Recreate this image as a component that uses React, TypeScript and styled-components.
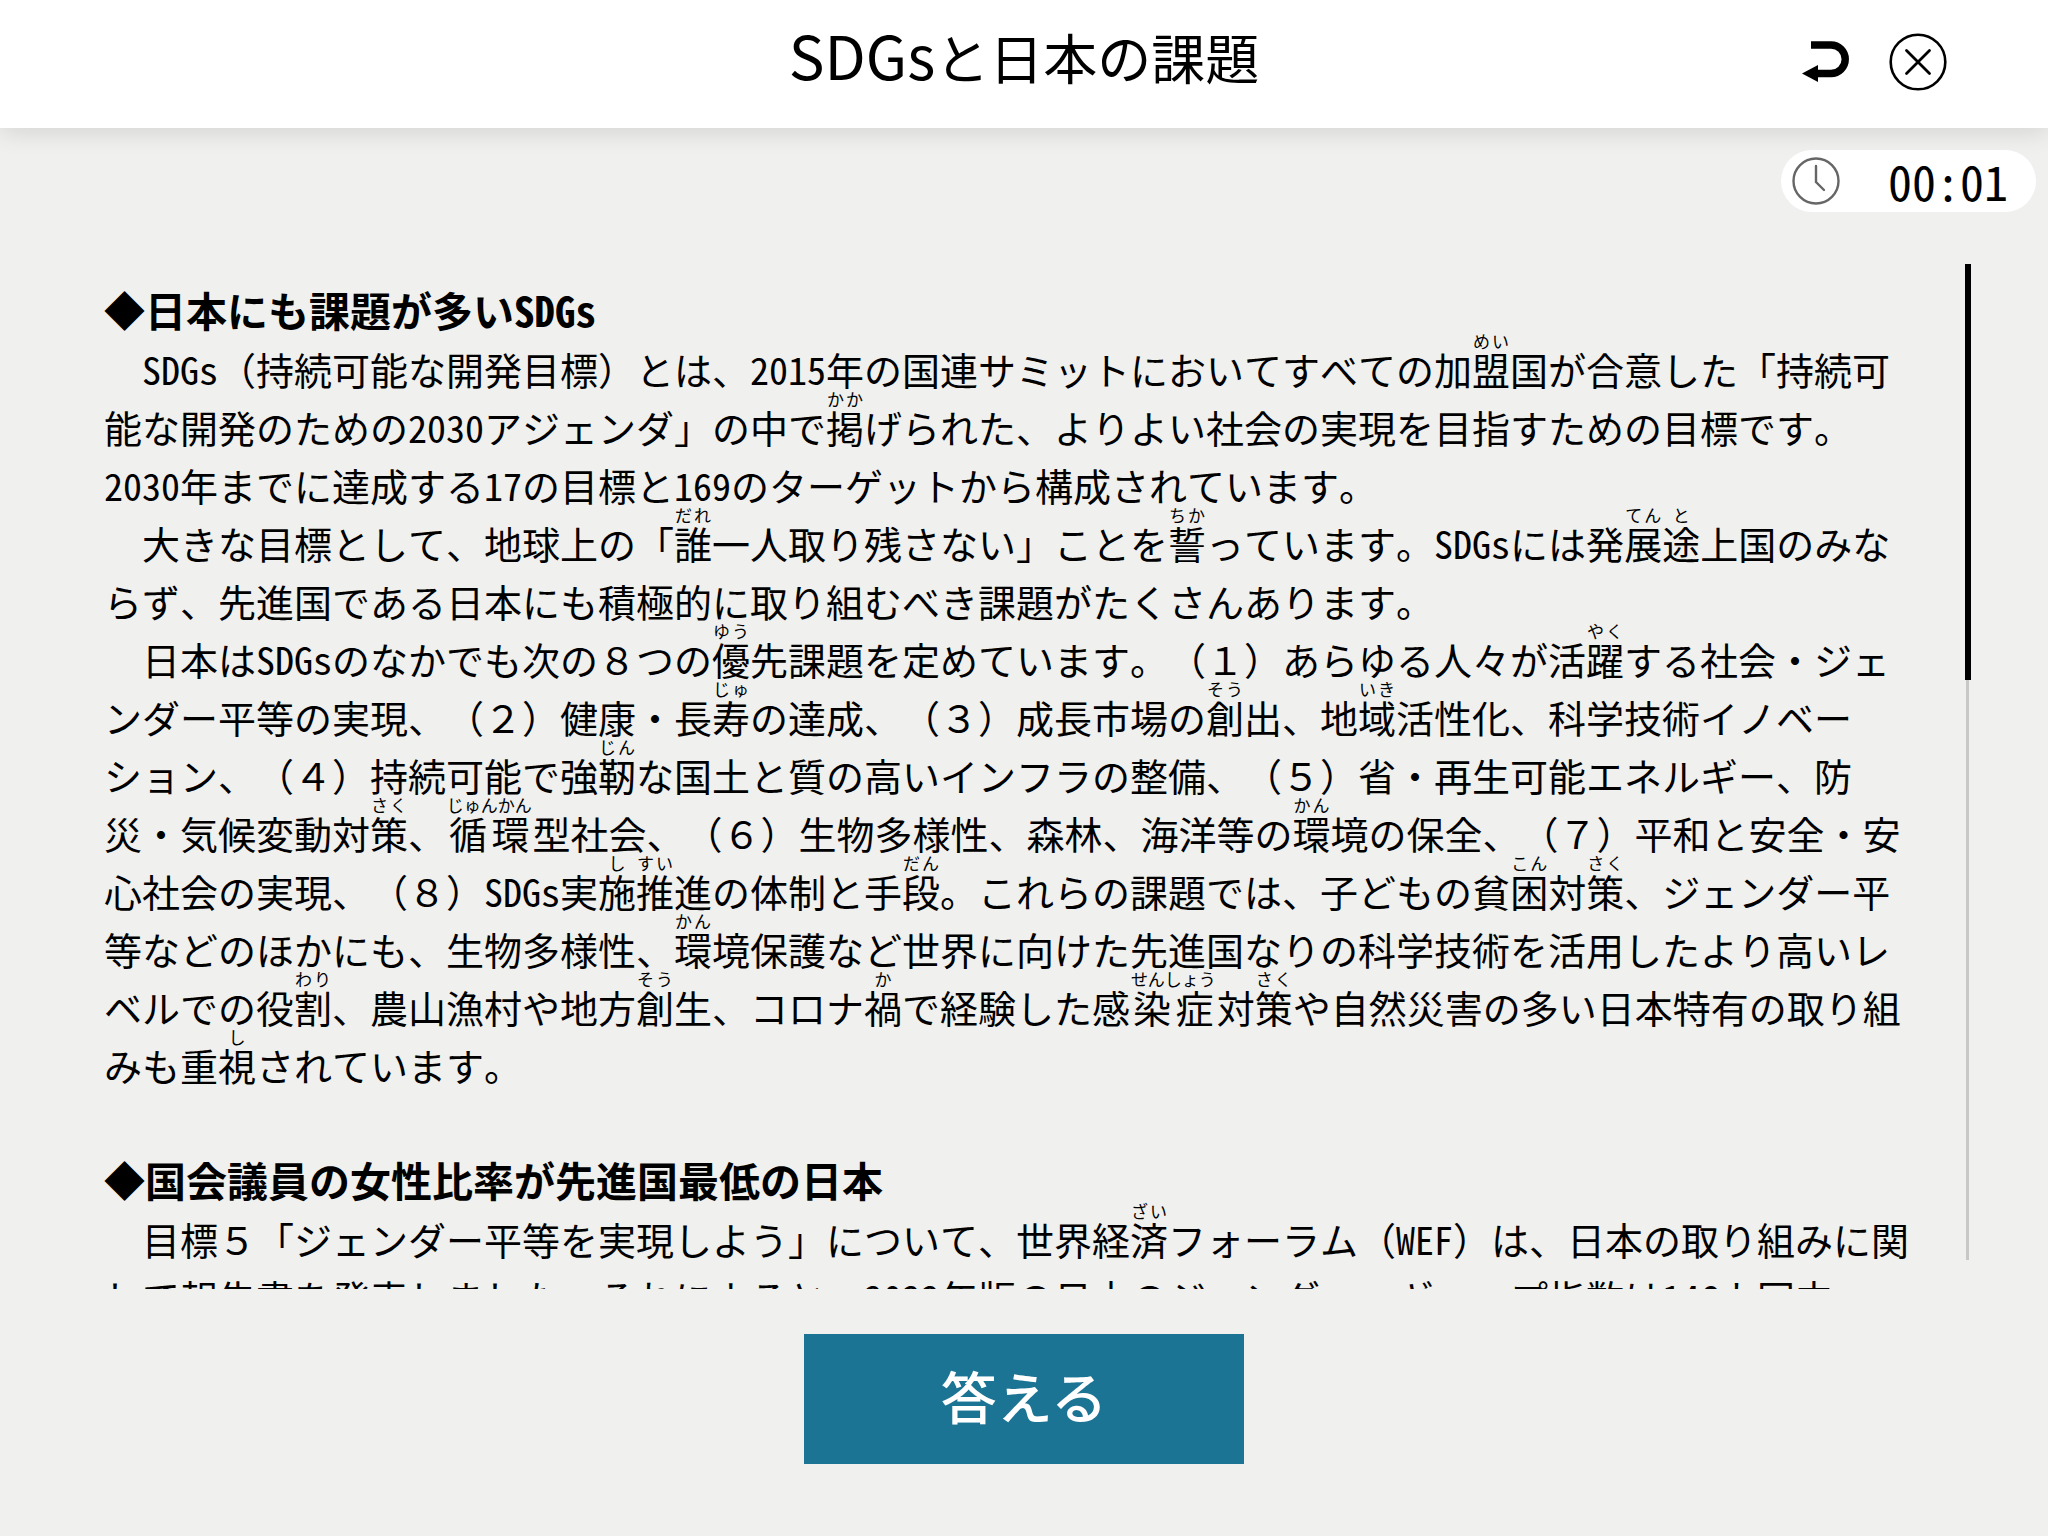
import React from "react";
import styled, { createGlobalStyle } from "styled-components";

const GlobalStyle = createGlobalStyle`
  html, body, #root { height: 100%; }
  body {
    margin: 0;
    background: #f0f0ee;
    color: #000;
    font-family: "Noto Sans CJK JP", sans-serif;
    font-kerning: none;
    text-spacing-trim: space-all;
    overflow: hidden;
  }
`;

const Screen = styled.div`
  height: 100%;
  display: flex;
  flex-direction: column;
`;

const Header = styled.header`
  flex: none;
  height: 128px;
  box-sizing: border-box;
  padding: 0 101px 4px;
  display: grid;
  grid-template-columns: 1fr auto 1fr;
  align-items: center;
  background: #fff;
  box-shadow: 0 4px 24px rgba(0, 0, 0, 0.12);
`;

const Title = styled.h1`
  grid-column: 2;
  align-self: start;
  margin: 0;
  font-size: 54px;
  font-weight: 400;
  line-height: 108px;
`;

const TitleLatin = styled.span`
  font-size: 60px;
`;

const HeaderActions = styled.div`
  display: flex;
  justify-content: flex-end;
  align-items: center;
  gap: 39px;
`;

const IconButton = styled.button`
  display: flex;
  padding: 0;
  border: 0;
  background: none;
  color: inherit;
  cursor: pointer;
`;

const TimerRow = styled.div`
  flex: none;
  display: flex;
  justify-content: flex-end;
  padding: 22px 12px 0;
`;

const TimerPill = styled.div`
  width: 255px;
  height: 62px;
  box-sizing: border-box;
  padding: 0 28px 0 11px;
  display: flex;
  align-items: center;
  justify-content: space-between;
  border-radius: 31px;
  background: #fff;
`;

const TimerText = styled.time`
  height: 62px;
  font-size: 48px;
  line-height: 60px;
  font-feature-settings: "hwid";
`;

const Reader = styled.main`
  flex: 1;
  min-height: 0;
  display: flex;
  margin-top: 52px;
  padding: 0 77px 0 104px;
`;

/* Headings and paragraphs share one inline flow, so that readings above
   a paragraph's first line do not open up the line spacing. */
const Article = styled.article`
  flex: 1;
  min-width: 0;
  overflow: hidden;
  padding-top: 18px;
  font-size: 38px;
  line-height: 58px;
  line-break: strict;
`;

const Section = styled.section`
  display: inline;

  &:not(:last-child)::after {
    content: "\\A";
    white-space: pre;
  }
`;

const Heading = styled.h2`
  display: inline;
  margin: 0;
  font-size: 41px;
  font-weight: 700;
  line-height: 48px;

  &::after {
    content: "\\A";
    white-space: pre;
  }
`;

const Paragraph = styled.p`
  display: inline;
  margin: 0;

  &::after {
    content: "\\A";
    white-space: pre;
  }
`;

const Half = styled.span`
  font-feature-settings: "hwid";
`;

const Furigana = styled.ruby<{ $wide: boolean }>`
  margin: 0 ${(p) => (p.$wide ? "3px" : "0")};
`;

const Reading = styled.rt`
  font-size: 17px;
`;

const ScrollTrack = styled.div`
  flex: none;
  width: 6px;
  margin: 0 0 29px 48px;
  background: linear-gradient(#c8c8c6, #c8c8c6) 1px 0 / 3px 100% no-repeat;
`;

const ScrollThumb = styled.div`
  width: 6px;
  height: 416px;
  background: #000;
`;

const Footer = styled.footer`
  flex: none;
  display: flex;
  justify-content: center;
  padding: 45px 0 72px;
`;

const AnswerButton = styled.button`
  width: 440px;
  height: 130px;
  padding: 0 0 8px;
  border: 0;
  background: #1c7495;
  color: #fff;
  font-family: inherit;
  font-size: 56px;
  font-weight: 500;
  line-height: 122px;
  cursor: pointer;
`;

const BackIcon = () => (
  <svg width="48" height="44" viewBox="0 0 48 44" fill="none" aria-hidden="true">
    <path d="M9 5H29A14.2 14.2 0 0 1 29 33.5H15" stroke="currentColor" strokeWidth="7.4" />
    <path d="M0 33.5L16 25V42Z" fill="currentColor" />
  </svg>
);

const CloseIcon = () => (
  <svg width="58" height="58" viewBox="0 0 58 58" fill="none" stroke="currentColor" aria-hidden="true">
    <circle cx="29" cy="29" r="27.3" strokeWidth="2.6" />
    <path d="M17.5 17.5L40.5 40.5M40.5 17.5L17.5 40.5" strokeWidth="2.8" strokeLinecap="round" />
  </svg>
);

const ClockIcon = () => (
  <svg width="48" height="48" viewBox="0 0 48 48" fill="none" stroke="#666" aria-hidden="true">
    <circle cx="24" cy="24" r="22.5" strokeWidth="2.4" />
    <path d="M24 9V25L32 33" strokeWidth="2.4" strokeLinecap="round" />
  </svg>
);

const R = ({ b, t }: { b: string; t: string }) => (
  <Furigana $wide={t.length > b.length * 2}>
    {b}
    <Reading>{t}</Reading>
  </Furigana>
);

export default function App() {
  return (
    <Screen lang="ja">
      <GlobalStyle />
      <Header>
        <Title>
          <TitleLatin>SDGs</TitleLatin>と日本の課題
        </Title>
        <HeaderActions>
          <IconButton type="button" aria-label="戻る">
            <BackIcon />
          </IconButton>
          <IconButton type="button" aria-label="閉じる">
            <CloseIcon />
          </IconButton>
        </HeaderActions>
      </Header>
      <TimerRow>
        <TimerPill>
          <ClockIcon />
          <TimerText>00:01</TimerText>
        </TimerPill>
      </TimerRow>
      <Reader>
        <Article>
          <Section>
            <Heading>
              ◆日本にも課題が多い<Half>SDGs</Half>
            </Heading>
            <Paragraph>
              {"　"}<Half>SDGs</Half>（持続可能な開発目標）とは、<Half>2015</Half>年の国連サミットにおいてすべての加<R b="盟" t="めい" />国が合意した「持続可能な開発のための<Half>2030</Half>アジェンダ」の中で<R b="掲" t="かか" />げられた、よりよい社会の実現を目指すための目標です。<Half>2030</Half>年までに達成する<Half>17</Half>の目標と<Half>169</Half>のターゲットから構成されています。
            </Paragraph>
            <Paragraph>
              {"　"}大きな目標として、地球上の「<R b="誰" t="だれ" />一人取り残さない」ことを<R b="誓" t="ちか" />っています。<Half>SDGs</Half>には発<R b="展" t="てん" /><R b="途" t="と" />上国のみならず、先進国である日本にも積極的に取り組むべき課題がたくさんあります。
            </Paragraph>
            <Paragraph>
              {"　"}日本は<Half>SDGs</Half>のなかでも次の８つの<R b="優" t="ゆう" />先課題を定めています。（１）あらゆる人々が活<R b="躍" t="やく" />する社会・ジェンダー平等の実現、（２）健康・長<R b="寿" t="じゅ" />の達成、（３）成長市場の<R b="創" t="そう" />出、地<R b="域" t="いき" />活性化、科学技術イノベーション、（４）持続可能で強<R b="靭" t="じん" />な国土と質の高いインフラの整備、（５）省・再生可能エネルギー、防災・気候変動対<R b="策" t="さく" />、<R b="循環" t="じゅんかん" />型社会、（６）生物多様性、森林、海洋等の<R b="環" t="かん" />境の保全、（７）平和と安全・安心社会の実現、（８）<Half>SDGs</Half>実<R b="施" t="し" /><R b="推" t="すい" />進の体制と手<R b="段" t="だん" />。これらの課題では、子どもの貧<R b="困" t="こん" />対<R b="策" t="さく" />、ジェンダー平等などのほかにも、生物多様性、<R b="環" t="かん" />境保護など世界に向けた先進国なりの科学技術を活用したより高いレベルでの役<R b="割" t="わり" />、農山漁村や地方<R b="創" t="そう" />生、コロナ<R b="禍" t="か" />で経験した感<R b="染症" t="せんしょう" />対<R b="策" t="さく" />や自然災害の多い日本特有の取り組みも重<R b="視" t="し" />されています。
            </Paragraph>
          </Section>
          <Section>
            <Heading>◆国会議員の女性比率が先進国最低の日本</Heading>
            <Paragraph>
              {"　"}目標５「ジェンダー平等を実現しよう」について、世界経<R b="済" t="ざい" />フォーラム（<Half>WEF</Half>）は、日本の取り組みに関して報告書を発表しました。それによると、<Half>2022</Half>年版の日本のジェンダー・ギャップ指数は<Half>146</Half>カ国中、<Half>116</Half>位でした。
            </Paragraph>
          </Section>
        </Article>
        <ScrollTrack>
          <ScrollThumb />
        </ScrollTrack>
      </Reader>
      <Footer>
        <AnswerButton type="button">答える</AnswerButton>
      </Footer>
    </Screen>
  );
}
